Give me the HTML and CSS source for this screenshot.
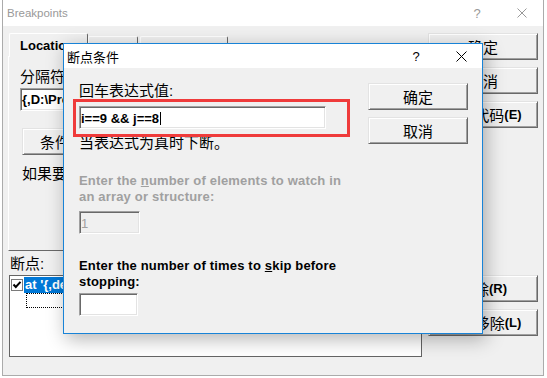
FILE: index.html
```html
<!DOCTYPE html>
<html>
<head>
  <title>Breakpoints</title>
  <link rel="stylesheet" href="styles.css">
</head>
<body>
  <!-- 主窗口 -->
  <div class="window main">
    <div class="caption">
      <span class="caption-text">Breakpoints</span>
      <span class="cap-btn help">?</span>
      <span class="cap-btn close">
        <svg width="10" height="10" viewBox="0 0 10 10"><path d="M0.5 0.5 L9.5 9.5 M9.5 0.5 L0.5 9.5" stroke="currentColor" stroke-width="1" fill="none"/></svg>
      </span>
    </div>
    <div class="client">
      <div class="left-col">
        <div class="tabs">
          <div class="tab active tab-location">Location</div>
          <div class="tab tab-data">Data</div>
          <div class="tab tab-messages">Messages</div>
        </div>
        <div class="panel">
          <div class="cjk-label">分隔符(<b>B</b>):</div>
          <div class="edit bold break-at">{,D:\Projects\demo\demo.cpp,} .12</div>
          <div class="btn cond-btn">条件(<b class="key">C</b>)...</div>
          <div class="cjk-label cond-hint">如果要设置条件断点，请单击“条件”按钮。</div>
        </div>
        <div class="cjk-label bp-label">断点:</div>
        <div class="listbox">
          <div class="bp-item">
            <span class="check">
              <svg width="12" height="12" viewBox="0 0 12 12">
                <rect x="0.5" y="0.5" width="11" height="11" fill="#fff" stroke="#7a7a7a"/>
                <path d="M2.5 5.5 L4.8 8 L9.5 2.8" stroke="#000" stroke-width="2" fill="none"/>
              </svg>
            </span>
            <span class="sel">at '{,demo.cpp,} .12' when 'i==9 &amp;&amp; j==8'</span>
          </div>
          <div class="focus-item"></div>
        </div>
      </div>
      <div class="right-col">
        <div class="btn">确定</div>
        <div class="btn">取消</div>
        <div class="btn">编辑代码<b class="key">(E)</b></div>
        <div class="btn lower">删除<b class="key">(R)</b></div>
        <div class="btn">全部移除<b class="key">(L)</b></div>
      </div>
    </div>
  </div>

  <!-- 断点条件对话框 -->
  <div class="window dialog">
    <div class="caption">
      <span class="caption-text">断点条件</span>
      <span class="cap-btn help">?</span>
      <span class="cap-btn close">
        <svg width="11" height="11" viewBox="0 0 11 11"><path d="M0.5 0.5 L10.5 10.5 M10.5 0.5 L0.5 10.5" stroke="currentColor" stroke-width="1" fill="none"/></svg>
      </span>
    </div>
    <div class="dlg-body">
      <div class="dlg-main">
        <div class="cjk-label">回车表达式值:</div>
        <div class="edit bold expr">i==9 &amp;&amp; j==8<span class="caret"></span></div>
        <div class="cjk-label hint">当表达式为真时下断。</div>
        <div class="en-label disabled">Enter the <u>n</u>umber of elements to watch in<br>an array or structure:</div>
        <div class="edit bold small disabled-edit">1</div>
        <div class="en-label skip">Enter the number of times to <u>s</u>kip before<br>stopping:</div>
        <div class="edit small skip-edit"></div>
      </div>
      <div class="dlg-buttons">
        <div class="btn">确定</div>
        <div class="btn">取消</div>
      </div>
      <div class="callout"></div>
    </div>
  </div>
</body>
</html>
```

FILE: styles.css
```css
/* 整体 */
body {
  margin: 0;
  width: 547px;
  height: 378px;
  position: relative;
  overflow: hidden;
  background: #fff;
  font-family: "Liberation Sans", "Noto Sans CJK SC", sans-serif;
  font-size: 13px;
  color: #000;
}

.window {
  position: absolute;
  box-sizing: border-box;
  display: flex;
  flex-direction: column;
  background: #f0f0f0;
}

.main {
  left: 2px;
  top: 0;
  width: 542px;
  height: 376px;
  border: 1px solid #ababab;
  border-top: none;
  z-index: 0;
}

.dialog {
  left: 63px;
  top: 43px;
  width: 420px;
  height: 291px;
  border: 1px solid #1883d7;
  box-shadow: 3px 5px 18px rgba(0, 0, 0, 0.3);
  z-index: 1;
}

/* 标题栏 */
.caption {
  flex: none;
  display: flex;
  align-items: center;
  background: #fff;
}

.main .caption {
  height: 26px;
  color: #999;
}

.dialog .caption {
  height: 24px;
  color: #000;
}

.caption-text {
  flex: 1;
  white-space: nowrap;
}

.main .caption-text {
  padding-left: 4px;
  font-size: 11.5px;
}

.dialog .caption-text {
  padding-left: 3px;
  font-size: 13px;
}

.cap-btn {
  height: 100%;
  display: flex;
  align-items: center;
  justify-content: center;
}

.help {
  width: 48px;
  font-size: 13px;
}

.close {
  width: 42px;
}

/* 主窗口内容 */
.client {
  flex: 1;
  display: flex;
  gap: 6px;
  padding: 7px 5px 0 5px;
}

.left-col {
  width: 414px;
  display: flex;
  flex-direction: column;
}

.right-col {
  width: 110px;
  display: flex;
  flex-direction: column;
  gap: 7px;
}

.right-col .lower {
  margin-top: 140px;
}

.tabs {
  display: flex;
  align-items: flex-end;
  height: 23px;
  padding-left: 1px;
  position: relative;
  z-index: 1;
}

.tab {
  box-sizing: border-box;
  height: 20px;
  padding: 3px 0 0 10px;
  font-weight: bold;
  white-space: nowrap;
  overflow: hidden;
  border: 1px solid;
  border-color: #fff #696969 transparent #fff;
  border-bottom: none;
  border-radius: 2px 2px 0 0;
}

.tab.active {
  height: 24px;
  margin-bottom: -1px;
  padding-top: 4px;
  background: #f0f0f0;
}

.tab-location {
  width: 79px;
}

.tab-data {
  width: 50px;
}

.tab-messages {
  width: 88px;
  margin-left: 2px;
}

.panel {
  box-sizing: border-box;
  height: 195px;
  padding: 11px 0 0 11px;
  border: 1px solid;
  border-color: #fff #696969 #696969 #fff;
  display: flex;
  flex-direction: column;
  align-items: flex-start;
  overflow: hidden;
}

.cjk-label {
  font-size: 15px;
  line-height: 17px;
  height: 17px;
  white-space: nowrap;
}

.cjk-label b {
  font-size: 13px;
}

.break-at {
  margin-top: 3px;
  width: 380px;
}

.cond-btn {
  margin: 17px 0 0 2px;
  width: 98px;
}

.cond-hint {
  margin: 10px 0 0 2px;
}

.bp-label {
  margin-top: 4px;
  padding-left: 2px;
}

.listbox {
  box-sizing: border-box;
  margin: 3px 0 0 1px;
  width: 413px;
  height: 82px;
  border: 1px solid #646464;
  background: #fff;
  padding: 1px 0 0 1px;
  overflow: hidden;
}

.bp-item {
  display: flex;
  align-items: center;
  height: 16px;
}

.check {
  display: flex;
  margin-right: 1px;
}

.sel {
  height: 16px;
  line-height: 16px;
  padding: 0 3px 0 1px;
  background: #0078d7;
  color: #fff;
  font-weight: bold;
  white-space: nowrap;
}

.focus-item {
  margin: 0 0 0 15px;
  width: 150px;
  height: 15px;
  box-sizing: border-box;
  border: 1px dotted #000;
}

/* 按钮和编辑框 */
.btn {
  box-sizing: border-box;
  height: 27px;
  display: flex;
  align-items: center;
  justify-content: center;
  font-size: 15px;
  white-space: nowrap;
  background: #f0f0f0;
  border: 1px solid;
  border-color: #e3e3e3 #696969 #696969 #e3e3e3;
  box-shadow: inset 1px 1px #fff, inset -1px -1px #a0a0a0;
}

.btn .key {
  font-size: 13px;
}

.edit {
  box-sizing: border-box;
  height: 23px;
  line-height: 19px;
  padding: 1px 0 0 1px;
  background: #fff;
  white-space: nowrap;
  overflow: hidden;
  border: 1px solid;
  border-color: #a0a0a0 #fff #fff #a0a0a0;
  box-shadow: inset 1px 1px #696969, inset -1px -1px #e3e3e3;
}

.bold {
  font-weight: bold;
}

/* 对话框内容 */
.dlg-body {
  position: relative;
  flex: 1;
  display: flex;
  padding: 14px 14px 0 15px;
}

.dlg-main {
  flex: 1;
  display: flex;
  flex-direction: column;
  align-items: flex-start;
}

.dlg-buttons {
  width: 100px;
  padding-top: 1px;
  display: flex;
  flex-direction: column;
  gap: 7px;
}

.expr {
  margin-top: 7px;
  width: 247px;
  display: flex;
  align-items: center;
}

.caret {
  display: inline-block;
  width: 1px;
  height: 13px;
  margin-left: 1px;
  background: #000;
}

.hint {
  margin-top: 5px;
}

.en-label {
  font-weight: bold;
  line-height: 16px;
  letter-spacing: 0.18px;
  white-space: nowrap;
}

.en-label.disabled {
  margin-top: 22px;
  color: #a0a0a0;
}

.small {
  height: 23px;
}

.disabled-edit {
  margin-top: 6px;
  width: 61px;
  background: #f0f0f0;
  color: #a0a0a0;
  font-weight: normal;
  padding-top: 2px;
}

.skip {
  margin-top: 24px;
}

.skip-edit {
  margin-top: 3px;
  width: 59px;
}

.callout {
  position: absolute;
  left: 9px;
  top: 31px;
  width: 277px;
  height: 38px;
  box-sizing: border-box;
  border: 3px solid #ef3b3b;
}
```
